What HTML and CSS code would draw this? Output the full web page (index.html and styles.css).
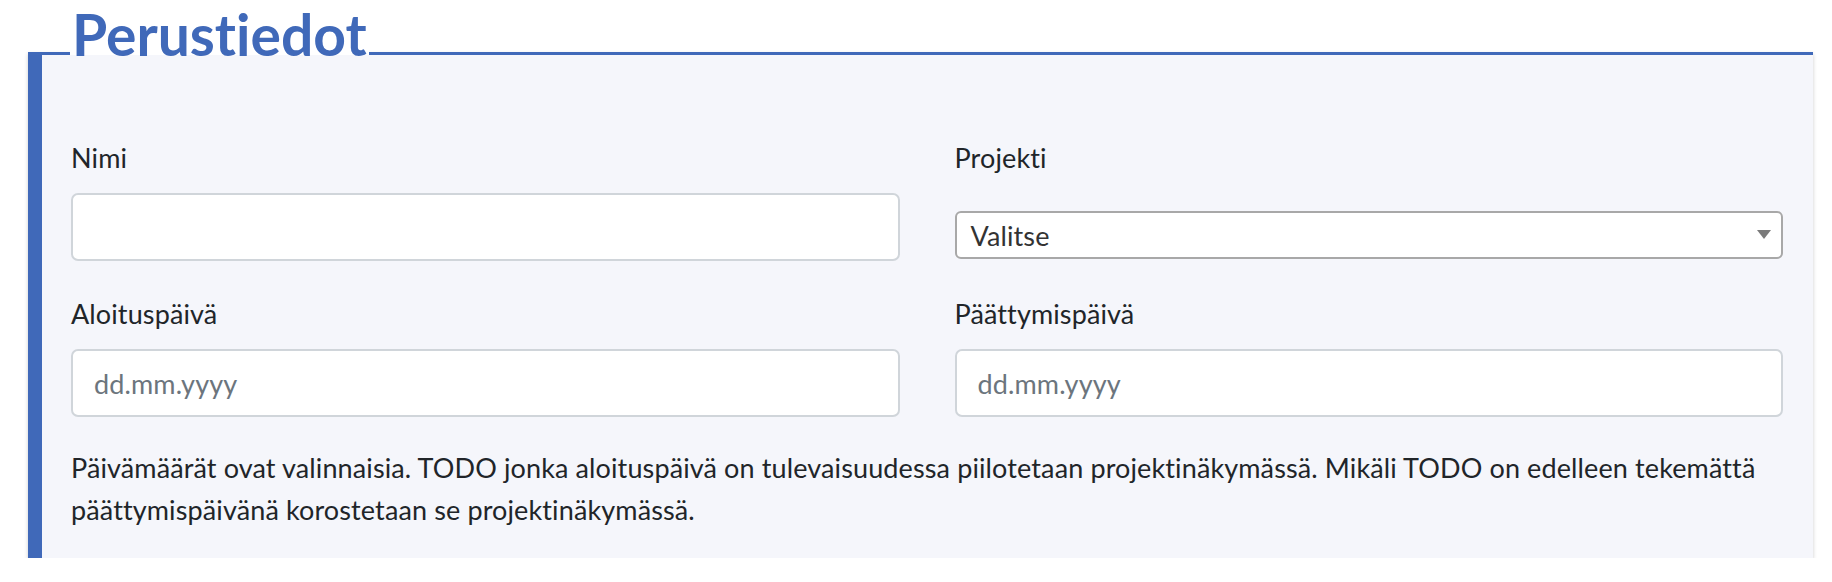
FILE: index.html
```html
<!DOCTYPE html>
<html lang="fi">
<head>
<meta charset="utf-8">
<title>Perustiedot</title>
<link rel="stylesheet" href="styles.css">
</head>
<body>
<div class="page">
  <h2 class="card-title">Perustiedot</h2>
  <section class="card">
    <div class="form-grid">
      <div class="field">
        <label class="field-label" for="nimi">Nimi</label>
        <input class="text-input" id="nimi" type="text">
      </div>
      <div class="field">
        <label class="field-label">Projekti</label>
        <div class="select-box">
          <span class="select-value">Valitse</span>
          <svg class="select-arrow" width="14" height="9" viewBox="0 0 14 9"><path d="M0 0 H14 L7 9 Z" fill="#7a7a7a"/></svg>
        </div>
      </div>
      <div class="field">
        <label class="field-label" for="alku">Aloituspäivä</label>
        <input class="text-input" id="alku" type="text" placeholder="dd.mm.yyyy">
      </div>
      <div class="field">
        <label class="field-label" for="loppu">Päättymispäivä</label>
        <input class="text-input" id="loppu" type="text" placeholder="dd.mm.yyyy">
      </div>
    </div>
    <p class="help-text">Päivämäärät ovat valinnaisia. TODO jonka aloituspäivä on tulevaisuudessa piilotetaan projektinäkymässä. Mikäli TODO on edelleen tekemättä päättymispäivänä korostetaan se projektinäkymässä.</p>
  </section>
</div>
</body>
</html>
```

FILE: styles.css
```css
* { box-sizing: border-box; }

html, body {
  margin: 0;
  padding: 0;
  background: #ffffff;
}

body {
  font-family: "Lato", "Open Sans", sans-serif;
  color: #212529;
  font-size: 27px;
  letter-spacing: 0.12px;
  font-variant-ligatures: none;
}

.page {
  padding: 0 19px 0 28px;
}

.card-title {
  position: relative;
  z-index: 1;
  margin: 0 0 0 42px;
  padding: 0 2px;
  width: fit-content;
  height: 55px;
  font-size: 57px;
  line-height: 68px;
  font-weight: 700;
  color: #4069b9;
  background: #ffffff;
  letter-spacing: 0;
}

.card {
  margin-top: -3px;
  background: #f5f6fb;
  border-top: 3px solid #4069b9;
  border-left: 14px solid #4069b9;
  box-shadow: 0 2px 4px rgba(0, 0, 0, 0.2);
  padding: 83px 30px 27px 29px;
}

.form-grid {
  display: grid;
  grid-template-columns: 1fr 1fr;
  column-gap: 55px;
  row-gap: 33px;
}

.field {
  display: flex;
  flex-direction: column;
}

.field-label {
  display: block;
  line-height: 39px;
  margin-bottom: 16px;
}

.text-input {
  display: block;
  width: 100%;
  height: 68px;
  border: 2px solid #d0d5da;
  border-radius: 7px;
  background: #ffffff;
  padding: 0 21px;
  font: inherit;
  letter-spacing: inherit;
  color: #495057;
  outline: none;
}

.text-input::placeholder {
  color: #6c757d;
}

.select-box {
  margin-top: 18px;
  height: 48px;
  border: 2px solid #a8a8a8;
  border-radius: 6px;
  background: #ffffff;
  display: flex;
  align-items: center;
  justify-content: space-between;
  padding: 0 10px 0 14px;
  color: #333333;
}

.select-arrow {
  flex: none;
  margin-bottom: 2px;
}

.help-text {
  margin: 30px 0 0;
  line-height: 42px;
}
```
